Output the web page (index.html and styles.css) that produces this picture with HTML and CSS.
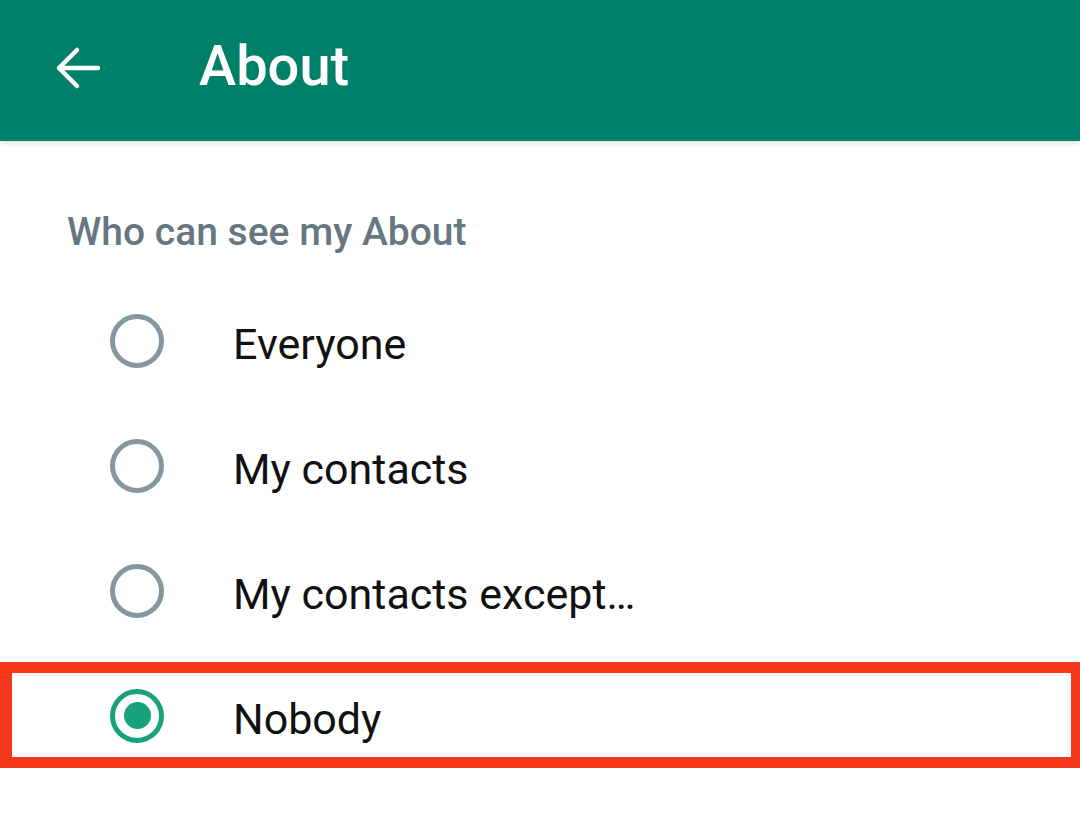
FILE: index.html
```html
<!DOCTYPE html>
<html lang="en">
<head>
  <meta charset="UTF-8" />
  <meta name="viewport" content="width=device-width, initial-scale=1.0"/>
  <title>About</title>
  <link rel="stylesheet" href="styles.css">
</head>
<body>
  <header class="appbar">
    <svg class="back" width="46" height="44" viewBox="0 0 46 44">
      <path d="M43 22H4M22 4L4 22l18 18" fill="none" stroke="#fff" stroke-width="4.5" stroke-linecap="round" stroke-linejoin="round"/>
    </svg>
    <h1>About</h1>
  </header>

  <div class="section-title">Who can see my About</div>

  <div class="options">
    <div class="row">
      <span class="radio"></span>
      <span class="label">Everyone</span>
    </div>
    <div class="row">
      <span class="radio"></span>
      <span class="label">My contacts</span>
    </div>
    <div class="row">
      <span class="radio"></span>
      <span class="label">My contacts except…</span>
    </div>
    <div class="row marked">
      <span class="radio checked"></span>
      <span class="label">Nobody</span>
    </div>
  </div>
</body>
</html>
```

FILE: styles.css
```css
body {
  margin: 0;
  font-family: Roboto, "Noto Sans", sans-serif;
  background: #ffffff;
  color: #111111;
}

.appbar {
  height: 141px;
  background: #008069;
  display: flex;
  align-items: center;
  padding-left: 55px;
  box-shadow: 0 2px 6px rgba(0, 0, 0, 0.12);
}

.back {
  display: block;
  margin-top: -5px;
}

.appbar h1 {
  margin: -10px 0 0 98px;
  font-size: 56px;
  font-weight: 500;
  color: #ffffff;
  line-height: 1;
}

.section-title {
  margin-top: 69px;
  padding-left: 67px;
  font-size: 39px;
  line-height: 44px;
  font-weight: 500;
  color: #667781;
}

.options {
  margin-top: 24px;
}

.row {
  position: relative;
  height: 125px;
  display: flex;
  align-items: center;
  padding-left: 110px;
}

.radio {
  width: 54px;
  height: 54px;
  box-sizing: border-box;
  border: 5px solid #8696a0;
  border-radius: 50%;
  display: flex;
  align-items: center;
  justify-content: center;
}

.radio.checked {
  border-color: #19a07d;
}

.radio.checked::after {
  content: "";
  width: 27px;
  height: 27px;
  border-radius: 50%;
  background: #19a07d;
}

.label {
  margin: 6px 0 0 69px;
  font-size: 43px;
  line-height: 50px;
  color: #111111;
}

.row.marked::after {
  content: "";
  position: absolute;
  left: 0;
  right: 0;
  top: 9px;
  bottom: 10px;
  border: solid #f5381a;
  border-width: 11px 9px 11px 12px;
  pointer-events: none;
}
```
